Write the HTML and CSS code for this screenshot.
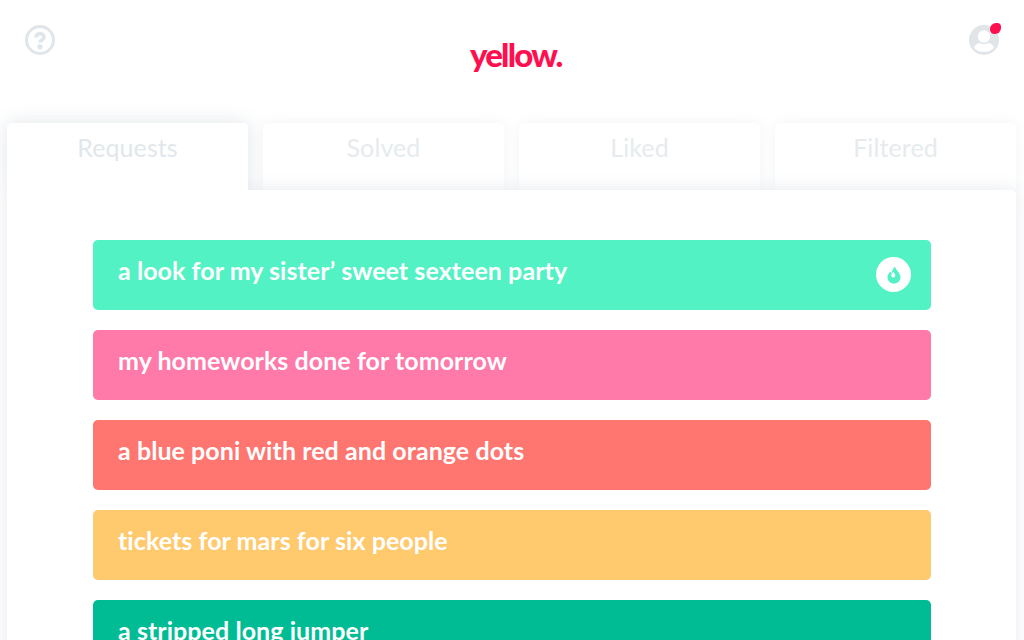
FILE: index.html
```html
<!DOCTYPE html>
<html lang="en">
<head>
    <meta charset="UTF-8">
    <meta name="viewport" content="width=device-width, initial-scale=1.0">
    <title>yellow.</title>
    <link rel="stylesheet" href="styles.css">
</head>
<body>

    <!-- Top bar -->
    <header class="top-bar">
        <svg class="help-icon" width="30" height="30" viewBox="0 0 30 30">
            <circle cx="15" cy="15" r="13.5" fill="none" stroke="#dfe5e9" stroke-width="3"/>
            <path d="M11 12.600c0-2.400 1.700-3.800 4-3.800s4 1.300 4 3.300c0 2.900-4 2.900-4 5.500" fill="none" stroke="#dfe5e9" stroke-width="3.600"/>
            <circle cx="15" cy="21.900" r="2.600" fill="#dfe5e9"/>
        </svg>
        <div class="logo">yellow.</div>
        <div class="profile">
            <svg width="30" height="30" viewBox="0 0 30 30">
                <circle cx="15" cy="15" r="15" fill="#dfe5e9"/>
                <path d="M5 22.500c2-4 6-5.500 10-5.500s8 1.500 10 5.500c-2.500 3-6 4.500-10 4.500S7 25.500 5 22.500z" fill="#fff"/>
                <circle cx="15" cy="11.500" r="7" fill="#fff" stroke="#dfe5e9" stroke-width="1.500"/>
            </svg>
            <span class="profile-dot"></span>
        </div>
    </header>

    <!-- Tabs -->
    <nav class="tabs">
        <div class="tab active"><span class="tab-label">Requests</span></div>
        <div class="tab"><span class="tab-label">Solved</span></div>
        <div class="tab"><span class="tab-label">Liked</span></div>
        <div class="tab"><span class="tab-label">Filtered</span></div>
    </nav>

    <!-- Request list -->
    <main class="panel">
        <div class="request green">
            a look for my sister’ sweet sexteen party
            <span class="hot-badge">
                <svg width="14" height="18" viewBox="0 0 14 18">
                    <path d="M8 0.500C8.500 4 13.500 6.500 13.500 11.500c0 3.300-2.900 6-6.500 6S0.500 14.800 0.500 11.500c0-2.800 1.500-4.500 3-6 0.300 1 0.600 1.500 1.200 1.900C5 4.500 6 2.300 8 0.500z" fill="#52f2c4"/>
                    <path d="M6.300 5.500c0.500 1.500 2 2.300 2 4 0 1.200-0.900 2-2 2s-2-0.800-2-2c0-1.700 1.500-2.500 2-4z" fill="#fff"/>
                </svg>
            </span>
        </div>
        <div class="request pink">my homeworks done for tomorrow</div>
        <div class="request red">a blue poni with red and orange dots</div>
        <div class="request orange">tickets for mars for six people</div>
        <div class="request teal">a stripped long jumper</div>
    </main>

</body>
</html>
```

FILE: styles.css
```css
html, body {
    height: 100%;
}

body {
    font-family: Lato, "Open Sans", sans-serif;
    background-color: white;
    margin: 0;
    padding: 0 8px 0 7px;
    overflow: hidden;
    box-sizing: border-box;
}

.top-bar {
    height: 123px;
    display: flex;
    justify-content: space-between;
    position: relative;
}

.help-icon {
    margin: 25px 0 0 18px;
}

.logo {
    position: absolute;
    left: 463px;
    top: 32px;
    font-size: 33px;
    line-height: 44px;
    font-weight: 900;
    letter-spacing: -1.800px;
    color: #ff0f50;
}

.profile {
    position: relative;
    width: 30px;
    height: 30px;
    margin: 25px 17px 0 0;
}

.profile-dot {
    position: absolute;
    top: -2px;
    right: -2px;
    width: 11px;
    height: 11px;
    border-radius: 55% 35% 55% 40%;
    background-color: #ff0f50;
}

.tabs {
    display: flex;
    gap: 15px;
}

.tab {
    flex: 1;
    position: relative;
    height: 67px;
    padding-top: 6px;
    box-sizing: border-box;
    background-color: white;
    border-radius: 5px 5px 0 0;
    box-shadow: 0 0 14px rgba(160, 175, 190, 0.14);
    color: #e6ebee;
    font-size: 25px;
    line-height: 36px;
    letter-spacing: 0.100px;
    text-align: center;
}

.tab.active {
    color: #e1e7eb;
    box-shadow: 0 0 18px rgba(150, 165, 180, 0.3);
}

/* covers the panel shadow so the active tab runs into the panel */
.tab.active::after {
    content: "";
    position: absolute;
    inset: 0;
    z-index: 2;
    background-color: white;
    border-radius: 5px 5px 0 0;
}

.tab-label {
    position: relative;
    z-index: 3;
}

.panel {
    position: relative;
    z-index: 1;
    height: 450px;
    padding: 50px 85px 0 86px;
    background-color: white;
    border-radius: 0 5px 0 0;
    box-shadow: 0 0 18px rgba(150, 165, 180, 0.24);
    display: flex;
    flex-direction: column;
    gap: 20px;
}

.request {
    flex: none;
    height: 70px;
    padding: 12px 20px 0 25px;
    box-sizing: border-box;
    display: flex;
    justify-content: space-between;
    border-radius: 5px;
    color: white;
    font-size: 25px;
    line-height: 36px;
    letter-spacing: 0.060px;
    font-weight: 700;
}

.request.green { background-color: #52f2c4; }
.request.pink { background-color: #ff79a9; }
.request.red { background-color: #ff7570; }
.request.orange { background-color: #ffc96e; }
.request.teal { background-color: #00bc94; }

.hot-badge {
    width: 35px;
    height: 35px;
    margin-top: 5px;
    border-radius: 50%;
    background-color: white;
    display: flex;
    align-items: center;
    justify-content: center;
}
```
